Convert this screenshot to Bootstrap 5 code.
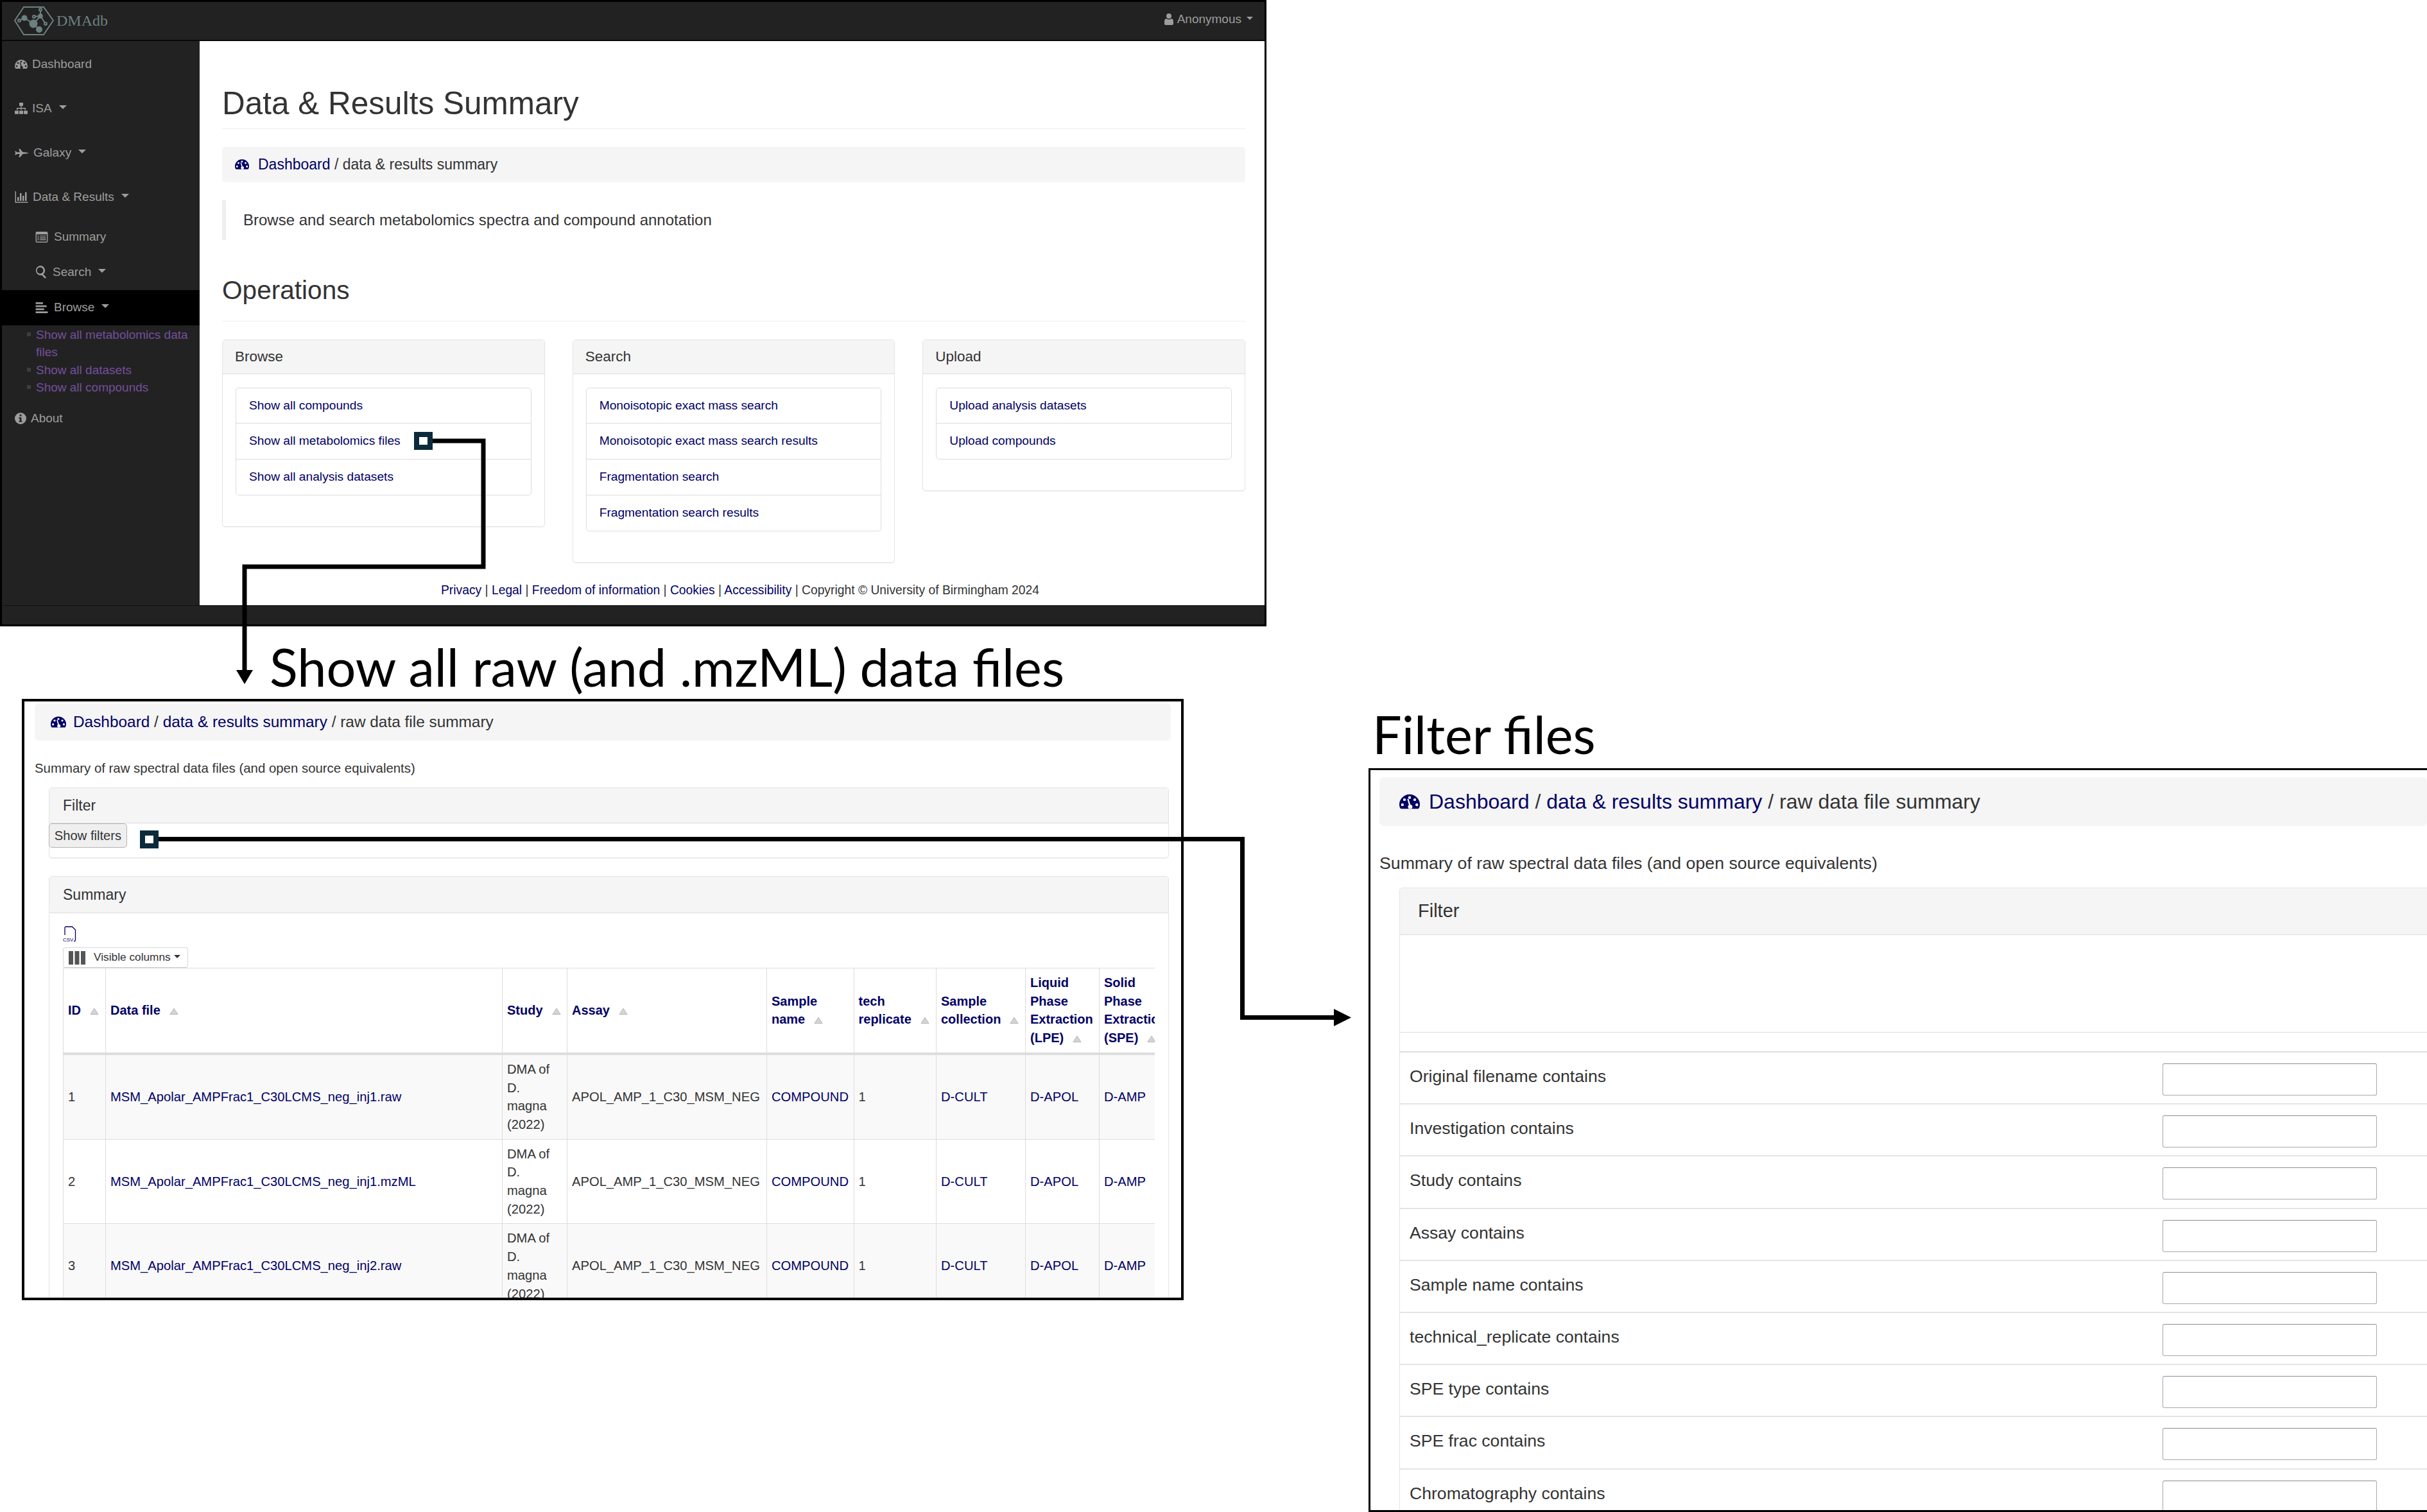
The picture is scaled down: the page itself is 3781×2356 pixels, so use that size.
<!DOCTYPE html>
<html lang="en">
<head>
  <meta charset="UTF-8">
  <title>DMAdb figure</title>
  <link href="https://cdn.jsdelivr.net/npm/bootstrap@5.3.3/dist/css/bootstrap.min.css" rel="stylesheet">
  <style>
    html, body { margin: 0; background: #fff; }
    body {
      width: 3781px;
      height: 2356px;
      position: relative;
      overflow: hidden;
      font-family: "Liberation Sans", Arial, sans-serif;
      color: #333;
    }
    a { color: #000066; text-decoration: none; }
    .ico { display: inline-block; fill: currentColor; flex: none; }
    .ico-navy { color: #000066; }

    /* the three windows on the canvas */
    .snap { position: absolute; overflow: hidden; background: #fff; }
    .snap-main { left: 0; top: 0; width: 1973px; height: 976px; border: 3px solid #000; }
    .snap-files { left: 34px; top: 1089px; width: 1810px; height: 937px; border: 4px solid #000; }
    .snap-filter { left: 2132px; top: 1197px; width: 1652px; height: 1159px; border: 3px solid #000; }
    .fig-title { position: absolute; font-family: Lato, "Open Sans", sans-serif; color: #000; line-height: 1; white-space: nowrap; }
    .title-files { left: 420px; top: 998px; font-size: 81px; }
    .title-filter { left: 2138px; top: 1103px; font-size: 81px; }
    .overlay-lines { position: absolute; left: 0; top: 0; }

    /* main window */
    .dm-nav { height: 61px; background: #222; border-bottom: 2px solid #080808; padding: 0 18px 0 19px; }
    .dm-brand { color: #6d8080; font-family: "Liberation Serif", serif; font-size: 24px; margin-left: 4px; }
    .dm-user { color: #9d9d9d; font-size: 19px; gap: 6px; margin-top: -4px; }
    .dm-user .dropdown-toggle::after { margin-left: 8px; }
    .dm-body { height: 880px; }
    .dm-side { width: 308px; background: #222; color: #9d9d9d; font-size: 19px; flex: none; padding-top: 2px; }
    .side-top, .side-sub { display: flex; align-items: center; color: #9d9d9d; }
    .side-top { height: 69px; padding-left: 20px; gap: 7px; }
    .side-sub { height: 55px; padding-left: 52px; gap: 9px; }
    .side-sub.active { background: #000; }
    .side-top .dropdown-toggle::after, .side-sub .dropdown-toggle::after { margin-left: 11px; border-top-width: 6px; border-left-width: 6px; border-right-width: 6px; }
    .side-links { list-style: none; margin: 0; padding: 1px 0 0 53px; line-height: 27.5px; }
    .side-links li { position: relative; }
    .side-links li::before { content: ""; position: absolute; left: -14px; top: 10px; width: 6px; height: 6px; background: #3d3d3d; }
    .side-links a { color: #744f9c; }
    .dm-page { flex: 1; padding: 70px 30px 0 35px; font-size: 19px; background: #fff; }
    .dm-h1 { font-size: 49.5px; line-height: 53.6px; font-weight: 500; margin: 0; padding-bottom: 12px; border-bottom: 1px solid #eee; color: #333; }
    .dm-crumb { background: #f5f5f5; border-radius: 5px; height: 55px; margin-top: 28px; padding: 0 20px; display: flex; align-items: center; gap: 14px; font-size: 23px; }
    .dm-quote { margin: 28px 0 0; height: 62px; border-left: 6px solid #eee; padding-left: 27px; display: flex; align-items: center; font-size: 24px; }
    .dm-h2 { font-size: 40.6px; line-height: 44.7px; font-weight: 500; margin: 56px 0 0; padding-bottom: 26px; border-bottom: 1px solid #eee; color: #333; }
    .op-row { --bs-gutter-x: 43px; margin-top: 28px; }
    .dm-card { --bs-card-border-color: #e4e4e4; --bs-card-border-radius: 5px; --bs-card-inner-border-radius: 4px; --bs-card-cap-bg: #f5f5f5; box-shadow: 0 1px 1px rgba(0,0,0,.06); }
    .dm-card > .card-header { border-bottom-color: #ddd; }
    .main-card > .card-header { height: 53px; padding: 0 19px; display: flex; align-items: center; font-size: 22.5px; }
    .main-card > .card-body { padding: 21px 20px; }
    .ops-list { --bs-list-group-border-color: #ddd; --bs-list-group-border-radius: 5px; margin-bottom: 27px; }
    .ops-list .list-group-item { height: 56px; padding: 0 20px; display: flex; align-items: center; font-size: 19.2px; color: #000066; }
    .dm-foot { margin-top: 29px; text-align: center; font-size: 19.3px; line-height: 27px; padding-left: 20px; color: #333; }
    .dm-bar { height: 30px; background: #222; border-top: 1px solid #111; }

    /* raw data file window */
    .files-crumb { background: #f5f5f5; border-radius: 6px; height: 58px; margin: 3px 16px 0 16px; padding: 0 25px; display: flex; align-items: center; gap: 11px; font-size: 24.4px; }
    .files-intro { margin: 30px 0 0 16px; font-size: 20.4px; line-height: 27px; }
    .files-filter { margin: 16px 19px 0 38px; }
    .files-filter > .card-header, .files-sum > .card-header { padding: 0 21px; display: flex; align-items: center; font-size: 23px; }
    .files-filter > .card-header { height: 55px; }
    .files-filter > .card-body { padding: 0; height: 53px; }
    .show-btn { --bs-btn-font-size: 20.2px; --bs-btn-color: #333; --bs-btn-bg: #efefef; --bs-btn-border-color: #b4b4b4; --bs-btn-border-radius: 5px; --bs-btn-padding-x: 6px; --bs-btn-padding-y: 0; height: 38px; width: 122px; margin-left: -1px; }
    .files-sum { margin: 28px 19px 0 38px; }
    .files-sum > .card-header { height: 57px; }
    .files-sum > .card-body { padding: 20px 0 0 21px; }
    .csv-ico { display: block; width: 22px; height: 25px; color: #000066; }
    .col-btn { margin-top: 8px; width: 195px; height: 32px; border: 1px solid #d8d8d8; border-bottom-color: #ccc; border-radius: 4px; background: #fff; padding: 0 8px; display: flex; align-items: center; gap: 13px; font-size: 17.3px; color: #333; }
    .col-btn .dropdown-toggle::after { margin-left: 5px; }
    .tbl-clip { width: 1701px; overflow: hidden; }
    .tbl-files { table-layout: fixed; width: 1729px; margin: 0; font-size: 20.2px; line-height: 28.7px;
      --bs-table-border-color: #ddd; --bs-table-striped-bg: #f9f9f9; --bs-table-color: #333; --bs-table-striped-color: #333; }
    .tbl-files col:nth-child(1) { width: 66px; }
    .tbl-files col:nth-child(2) { width: 618px; }
    .tbl-files col:nth-child(3) { width: 101px; }
    .tbl-files col:nth-child(4) { width: 311px; }
    .tbl-files col:nth-child(5) { width: 135.5px; }
    .tbl-files col:nth-child(6) { width: 128.5px; }
    .tbl-files col:nth-child(7) { width: 139px; }
    .tbl-files col:nth-child(8) { width: 115px; }
    .tbl-files col:nth-child(9) { width: 115px; }
    .tbl-files th, .tbl-files td { padding: 8px 6px 8px 7px; vertical-align: middle; overflow-wrap: normal; word-break: normal; overflow: visible; }
    .tbl-files thead th { color: #000066; font-weight: 700; font-size: 20px; height: 132px; border-bottom: 4px solid #ddd; }
    .tbl-files tbody td { height: 130px; }
    .tbl-files tbody td.cell-navy { --bs-table-striped-color: #000066; color: #000066; }
    .sort-ico { width: 14px; height: 12px; margin-left: 14px; vertical-align: -1px; }

    /* filter window */
    .big-crumb { background: #f5f5f5; border-radius: 7px; height: 76px; margin: 11px 0 0 14px; padding: 0 31px; display: flex; align-items: center; gap: 14px; font-size: 32px; }
    .big-intro { margin: 43px 0 0 14px; font-size: 26.7px; line-height: 30px; }
    .big-filter { margin: 23px -10px 0 45px; }
    .big-filter > .card-header { height: 73px; padding: 0 28px; display: flex; align-items: center; font-size: 29px; }
    .big-filter > .card-body { padding: 0; }
    .flt-gap { height: 152px; border-bottom: 1px solid #ddd; }
    .flt-gap2 { height: 31px; border-bottom: 2px solid #ddd; }
    .flt-row { height: 81.2px; padding: 17px 87px 0 15px; border-bottom: 2px solid #e4e4e4; display: flex; justify-content: space-between; align-items: flex-start; font-size: 26.6px; line-height: 40px; }
    .flt-row .form-control { width: 334px; height: 50px; border: 1px solid #a8a8b0; border-top-color: #8c8c96; border-radius: 3px; flex: none; }
  </style>
</head>
<body>

<!-- shared icons -->
<svg width="0" height="0" class="position-absolute">
  <symbol id="i-gauge" viewBox="0 0 20 16">
    <path fill-rule="evenodd" d="M10 1A10 10 0 0 0 0 11c0 1.500.4 2.700 1 3.600.2.300.5.400.8.400h16.400c.3 0 .6-.1.800-.4.600-.9 1-2.100 1-3.600A10 10 0 0 0 10 1zM10 2.700a1.400 1.400 0 1 1 0 2.800 1.400 1.400 0 0 1 0-2.800zM5 4.800a1.400 1.400 0 1 1 0 2.800 1.400 1.400 0 0 1 0-2.800zM15 4.800a1.400 1.400 0 1 1 0 2.800 1.400 1.400 0 0 1 0-2.800zM3 9.700a1.400 1.400 0 1 1 0 2.800 1.400 1.400 0 0 1 0-2.800zM17 9.700a1.400 1.400 0 1 1 0 2.800 1.400 1.400 0 0 1 0-2.800zM7.700 5.500l1.600 5.800a2.200 2.200 0 1 0 1.500-.4L9 5.200z"/>
  </symbol>
  <symbol id="i-sitemap" viewBox="0 0 20 18">
    <path d="M7 0h6v5h-2.300v3H17v3.500h-1.400V9.400h-5v2.100H9.400V9.400h-5v2.100H3V8h6.300V5H7zM0 12.500h6v4.300c0 .6-.4 1-1 1H1c-.6 0-1-.4-1-1zM7 12.500h6v4.300c0 .6-.4 1-1 1H8c-.6 0-1-.4-1-1zM14 12.500h6v4.300c0 .6-.4 1-1 1h-4c-.6 0-1-.4-1-1z"/>
  </symbol>
  <symbol id="i-shuttle" viewBox="0 0 24 16">
    <path d="M0 5h2l2 1.500h4.500L7 1h2l4.500 5.300C18 6.600 21.500 7.200 24 8c-2.500.8-6 1.400-10.500 1.700L9 15H7l1.500-5.500H4L2 11H0l1.500-3z"/>
  </symbol>
  <symbol id="i-bars" viewBox="0 0 20 18">
    <path d="M0 0h1.500v16.500H20V18H0zM3.500 9H6v6H3.500zM7.500 3H10v12H7.500zM11.500 7H14v8h-2.500zM15.500 1.500H18V15h-2.500z"/>
  </symbol>
  <symbol id="i-listalt" viewBox="0 0 20 18">
    <path fill-rule="evenodd" d="M2 0h16c1.100 0 2 .9 2 2v14c0 1.100-.9 2-2 2H2c-1.100 0-2-.9-2-2V2C0 .9.900 0 2 0zM1.500 4.500V16c0 .3.200.5.500.5h16c.3 0 .5-.2.500-.5V4.500zM3 6.500h2.500V8H3zM7 6.500h10V8H7zM3 9.500h2.500V11H3zM7 9.500h10V11H7zM3 12.500h2.500V14H3zM7 12.500h10V14H7z"/>
  </symbol>
  <symbol id="i-search" viewBox="0 0 18 20">
    <path fill-rule="evenodd" d="M7.500 0a7.500 7.500 0 0 1 4.800 13.300l4.700 4.900-2 1.800-4.700-5.300A7.500 7.500 0 1 1 7.500 0zM7.500 2.500a5 5 0 1 0 0 10 5 5 0 0 0 0-10z"/>
  </symbol>
  <symbol id="i-align" viewBox="0 0 20 18">
    <path d="M0 0h12v3H0zM0 5h18v3H0zM0 10h14v3H0zM0 15h20v3H0z"/>
  </symbol>
  <symbol id="i-info" viewBox="0 0 18 18">
    <path fill-rule="evenodd" d="M9 0a9 9 0 1 1 0 18A9 9 0 0 1 9 0zM7.600 2.800v2.700h2.800V2.800zM6.400 7.300v1.600h1.200v4H6.400v1.600h5.200v-1.600h-1.200V7.300z"/>
  </symbol>
  <symbol id="i-user" viewBox="0 0 14 18">
    <path d="M7 0a4 4 0 1 1 0 8 4 4 0 0 1 0-8zM3 8c1 .9 2.500 1.200 4 1.200S10 8.900 11 8c2 .4 3 2 3 5v3c0 1.200-.8 2-2 2H2c-1.200 0-2-.8-2-2v-3c0-3 1-4.600 3-5z"/>
  </symbol>
  <symbol id="i-sort" viewBox="0 0 15 12">
    <path d="M7.500 1 14 11H1z" fill="#d4d4d4" stroke="#b0b0b0" stroke-width="1"/>
  </symbol>
</svg>

<!-- main dashboard window -->
<div class="snap snap-main d-flex flex-column">
  <div class="dm-nav d-flex align-items-center justify-content-between">
    <div class="d-flex align-items-center">
      <svg width="62" height="45" viewBox="0 0 62 45" fill="none" stroke="#6d8080" stroke-width="2">
        <path d="M1 22 15 1h31l15 21-15 22H15z"/>
        <path d="M8 22l8-4 14 9 9 9M30 27l11-12V5M31 16l10-1 8 12"/>
        <circle cx="16" cy="18" r="3.500" fill="#6d8080"/>
        <circle cx="30" cy="27" r="5.500" fill="#6d8080"/>
        <circle cx="39" cy="36" r="4" fill="#6d8080"/>
        <circle cx="41" cy="15" r="2.800" fill="#6d8080"/>
        <circle cx="8" cy="22" r="2" fill="#222"/>
        <circle cx="41" cy="5" r="2" fill="#222"/>
        <circle cx="49" cy="27" r="2" fill="#222"/>
        <circle cx="31" cy="16" r="2" fill="#222"/>
      </svg>
      <span class="dm-brand">DMAdb</span>
    </div>
    <div class="dm-user d-flex align-items-center">
      <svg class="ico" width="14" height="18"><use href="#i-user"/></svg>
      <span class="dropdown-toggle">Anonymous</span>
    </div>
  </div>
  <div class="dm-body d-flex">
    <nav class="dm-side">
      <a class="side-top" href="#"><svg class="ico" width="20" height="16"><use href="#i-gauge"/></svg>Dashboard</a>
      <a class="side-top" href="#"><svg class="ico" width="20" height="18"><use href="#i-sitemap"/></svg><span class="dropdown-toggle">ISA</span></a>
      <a class="side-top" href="#"><svg class="ico" width="22" height="15"><use href="#i-shuttle"/></svg><span class="dropdown-toggle">Galaxy</span></a>
      <a class="side-top" href="#"><svg class="ico" width="21" height="18"><use href="#i-bars"/></svg><span class="dropdown-toggle">Data &amp; Results</span></a>
      <a class="side-sub" href="#"><svg class="ico" width="20" height="17"><use href="#i-listalt"/></svg>Summary</a>
      <a class="side-sub" href="#"><svg class="ico" width="18" height="20"><use href="#i-search"/></svg><span class="dropdown-toggle">Search</span></a>
      <a class="side-sub active" href="#"><svg class="ico" width="20" height="17"><use href="#i-align"/></svg><span class="dropdown-toggle">Browse</span></a>
      <ul class="side-links">
        <li><a href="#">Show all metabolomics data files</a></li>
        <li><a href="#">Show all datasets</a></li>
        <li><a href="#">Show all compounds</a></li>
      </ul>
      <a class="side-top" href="#"><svg class="ico" width="18" height="18"><use href="#i-info"/></svg>About</a>
    </nav>
    <main class="dm-page">
      <h1 class="dm-h1">Data &amp; Results Summary</h1>
      <div class="dm-crumb">
        <svg class="ico ico-navy" width="22" height="18"><use href="#i-gauge"/></svg>
        <span><a href="#">Dashboard</a> / data &amp; results summary</span>
      </div>
      <blockquote class="dm-quote">Browse and search metabolomics spectra and compound annotation</blockquote>
      <h2 class="dm-h2">Operations</h2>
      <div class="row op-row align-items-start" id="opRow"></div>
      <p class="dm-foot mb-0"><a href="#">Privacy</a> | <a href="#">Legal</a> | <a href="#">Freedom of information</a> | <a href="#">Cookies</a> | <a href="#">Accessibility</a> | Copyright © University of Birmingham 2024</p>
    </main>
  </div>
  <div class="dm-bar"></div>
</div>

<div class="fig-title title-files">Show all raw (and .mzML) data files</div>

<!-- raw data file summary window -->
<div class="snap snap-files">
  <div class="files-crumb">
    <svg class="ico ico-navy" width="24" height="20"><use href="#i-gauge"/></svg>
    <span><a href="#">Dashboard</a> / <a href="#">data &amp; results summary</a> / raw data file summary</span>
  </div>
  <p class="files-intro mb-0">Summary of raw spectral data files (and open source equivalents)</p>
  <div class="card dm-card files-filter">
    <div class="card-header">Filter</div>
    <div class="card-body"><button class="btn show-btn" type="button">Show filters</button></div>
  </div>
  <div class="card dm-card files-sum">
    <div class="card-header">Summary</div>
    <div class="card-body">
      <svg class="csv-ico" viewBox="0 0 22 25" fill="none" stroke="currentColor" stroke-width="1.300">
        <path d="M3 14V2.500C3 1.500 3.500 1 4.500 1h10l5 5v16c0 1-.5 1.500-1.500 1.500h-1"/>
        <text x="0" y="24" font-family="Liberation Sans, sans-serif" font-size="8" fill="currentColor" stroke="none">CSV</text>
      </svg>
      <div class="col-btn">
        <svg width="26" height="21" viewBox="0 0 26 21" fill="#555"><path d="M0 0h7v21H0zM9.500 0h7v21h-7zM19 0h7v21h-7z"/></svg>
        <span class="dropdown-toggle">Visible columns</span>
      </div>
      <div class="tbl-clip">
        <table class="table table-bordered table-striped tbl-files">
          <colgroup><col><col><col><col><col><col><col><col><col></colgroup>
          <thead><tr id="fileHead"></tr></thead>
          <tbody id="fileRows"></tbody>
        </table>
      </div>
    </div>
  </div>
</div>

<div class="fig-title title-filter">Filter files</div>

<!-- filter window -->
<div class="snap snap-filter">
  <div class="big-crumb">
    <svg class="ico ico-navy" width="32" height="26"><use href="#i-gauge"/></svg>
    <span><a href="#">Dashboard</a> / <a href="#">data &amp; results summary</a> / raw data file summary</span>
  </div>
  <p class="big-intro mb-0">Summary of raw spectral data files (and open source equivalents)</p>
  <div class="card dm-card big-filter">
    <div class="card-header">Filter</div>
    <div class="card-body">
      <div class="flt-gap"></div>
      <div class="flt-gap2"></div>
      <div id="filterRows"></div>
    </div>
  </div>
</div>

<!-- connectors between the windows -->
<svg class="overlay-lines" width="3781" height="2356" fill="none">
  <rect x="649" y="677" width="21" height="20" fill="#fff" stroke="#0b2b3c" stroke-width="8"/>
  <path d="M674 687H753V883H381V1050" stroke="#000" stroke-width="7"/>
  <path d="M368 1044h26l-13 22z" fill="#000"/>
  <rect x="222" y="1298" width="21" height="20" fill="#fff" stroke="#0b2b3c" stroke-width="8"/>
  <path d="M247 1307.500H1935.500V1585.500H2082" stroke="#000" stroke-width="7"/>
  <path d="M2078 1572l27 13.500-27 13.500z" fill="#000"/>
</svg>

<script>
  const cards = [
    { title: "Browse", links: ["Show all compounds", "Show all metabolomics files", "Show all analysis datasets"] },
    { title: "Search", links: ["Monoisotopic exact mass search", "Monoisotopic exact mass search results", "Fragmentation search", "Fragmentation search results"] },
    { title: "Upload", links: ["Upload analysis datasets", "Upload compounds"] }
  ];
  document.getElementById("opRow").innerHTML = cards.map(c => `
    <div class="col-4">
      <div class="card dm-card main-card">
        <div class="card-header">${c.title}</div>
        <div class="card-body">
          <div class="list-group ops-list">
            ${c.links.map(l => `<a class="list-group-item" href="#">${l}</a>`).join("")}
          </div>
        </div>
      </div>
    </div>`).join("");

  const sort = '<svg class="ico sort-ico"><use href="#i-sort"/></svg>';
  const heads = ["ID", "Data file", "Study", "Assay", "Sample name", "tech replicate", "Sample collection", "Liquid Phase Extraction (LPE)", "Solid Phase Extraction (SPE)"];
  document.getElementById("fileHead").innerHTML = heads.map(h => `<th>${h}${sort}</th>`).join("");

  const files = ["inj1.raw", "inj1.mzML", "inj2.raw"];
  document.getElementById("fileRows").innerHTML = files.map((f, i) => `
    <tr>
      <td>${i + 1}</td>
      <td><a href="#">MSM_Apolar_AMPFrac1_C30LCMS_neg_${f}</a></td>
      <td>DMA of D. magna (2022)</td>
      <td>APOL_AMP_1_C30_MSM_NEG</td>
      <td class="cell-navy">COMPOUND</td>
      <td>1</td>
      <td class="cell-navy">D-CULT</td>
      <td class="cell-navy">D-APOL</td>
      <td class="cell-navy">D-AMP</td>
    </tr>`).join("");

  const filters = ["Original filename", "Investigation", "Study", "Assay", "Sample name", "technical_replicate", "SPE type", "SPE frac", "Chromatography"];
  document.getElementById("filterRows").innerHTML = filters.map(f => `
    <div class="flt-row"><span>${f} contains</span><input class="form-control" type="text"></div>`).join("");
</script>

<script src="https://cdn.jsdelivr.net/npm/bootstrap@5.3.3/dist/js/bootstrap.bundle.min.js"></script>
</body>
</html>
